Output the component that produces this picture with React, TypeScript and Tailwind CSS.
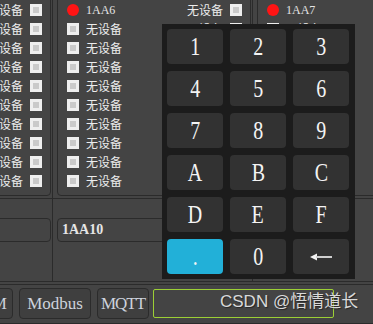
import React from 'react';

const cjk = "font-['Noto_Sans_CJK_SC',sans-serif]";
const serif = "font-['Liberation_Serif','Noto_Sans_CJK_SC',serif]";

const CheckBox: React.FC = () => (
  <span className="w-3 h-3 shrink-0 border-[3px] border-[#eeeeee] bg-[#c9c9c9]" />
);

const RedDot: React.FC = () => <span className="w-3 h-3 shrink-0 rounded-full bg-[#ff1414]" />;

type GroupProps = { head: string; right: number };

const Group: React.FC<GroupProps> = ({ head, right }) => (
  <div className="w-[194px] h-[206px] mt-[-10px] shrink-0 border border-[#2b2b2b] rounded-[4px] pt-[9px] pl-[9px] pr-[8px] flex justify-between">
    <div className="flex flex-col">
      <div className="h-[19px] flex items-center gap-[7px]">
        <RedDot />
        <span className={`${serif} text-[12px] leading-none text-[#e4e4e4]`}>{head}</span>
      </div>
      {Array.from({ length: 9 }).map((_, i) => (
        <div key={i} className="h-[19px] flex items-center gap-[7px]">
          <CheckBox />
          <span className={`${cjk} text-[12px] leading-none text-[#ececec]`}>无设备</span>
        </div>
      ))}
    </div>
    <div className="flex flex-col items-end">
      {Array.from({ length: right }).map((_, i) => (
        <div key={i} className="h-[19px] flex items-center gap-[7px]">
          <span className={`${cjk} text-[12px] leading-none text-[#ececec]`}>无设备</span>
          <CheckBox />
        </div>
      ))}
    </div>
  </div>
);

const Splitter: React.FC = () => (
  <div className="w-[6px] shrink-0 self-stretch">
    <div className="ml-px w-px h-full bg-[#2b2b2b]" />
  </div>
);

const keys = ['1', '2', '3', '4', '5', '6', '7', '8', '9', 'A', 'B', 'C', 'D', 'E', 'F', '.', '0', 'back'];

const BackArrow: React.FC = () => (
  <svg width="22" height="8" viewBox="0 0 22 8">
    <polygon points="0,4 7,0.5 7,7.5" fill="#f2f2f2" />
    <rect x="6" y="3" width="16" height="2" fill="#cfcfcf" />
  </svg>
);

const Keypad: React.FC = () => (
  <div className="absolute left-[162px] top-[24px] w-[193px] h-[255px] bg-[#1c1c1c] pt-[5px] pl-[5px] pr-[6px] pb-[5px] grid grid-cols-[56px_56px_56px] auto-rows-[35px] gap-[7px]">
    {keys.map((k) => (
      <div
        key={k}
        className={`rounded-[4px] flex items-center justify-center ${k === '.' ? 'bg-[#22b0d8]' : 'bg-[#323232]'}`}
      >
        {k === 'back' ? (
          <BackArrow />
        ) : (
          <span className={`${serif} inline-block scale-x-[0.8] text-[25px] leading-none text-[#f4f4f4]`}>{k}</span>
        )}
      </div>
    ))}
  </div>
);

const BarButton: React.FC<{ label: string; className: string }> = ({ label, className }) => (
  <div
    className={`h-[31px] shrink-0 rounded-[4px] border border-[#2b2b2b] bg-[#3f3f3f] flex items-center ${serif} text-[17px] text-[#cdd2dc] ${className}`}
  >
    {label}
  </div>
);

export default function App() {
  return (
    <div className="relative w-[373px] h-[324px] overflow-hidden bg-[#444444] flex flex-col">
      <div className="h-[281px] flex flex-col shrink-0">
        <div className="h-[198px] flex items-start ml-[-143px]">
          <Group head="1AA5" right={10} />
          <Splitter />
          <Group head="1AA6" right={10} />
          <Splitter />
          <Group head="1AA7" right={10} />
        </div>
        <div className="h-px bg-[#2b2b2b]" />
        <div className="h-[82px] flex ml-[-143px]">
          <div className="w-[194px] shrink-0 pt-[19px]">
            <div className="h-[24px] rounded-[4px] border border-[#2b2b2b]" />
          </div>
          <Splitter />
          <div className="w-[194px] shrink-0 pt-[19px]">
            <div className="h-[24px] rounded-[4px] border border-[#2b2b2b] pl-[4px] flex items-center">
              <span className={`${serif} font-bold text-[14px] leading-none text-[#e6e6e6]`}>1AA10</span>
            </div>
          </div>
          <Splitter />
        </div>
      </div>
      <div className="h-[4px] shrink-0 border-y border-[#2b2b2b]" />
      <div className="h-[39px] shrink-0 border-b border-[#2b2b2b] pt-[3px] flex items-start gap-[6px] ml-[-40px]">
        <BarButton label="GSM" className="w-[53px] justify-end pr-[5px]" />
        <BarButton label="Modbus" className="w-[72px] justify-center" />
        <BarButton label="MQTT" className="w-[52px] justify-center tracking-[-1px] mr-[-2px]" />
        <div className="mt-px w-[181px] h-[29px] shrink-0 rounded-[2px] border border-[#9ccf35]" />
      </div>
      <Keypad />
      <div
        className={`absolute left-[220px] top-[290px] leading-[24px] text-[17px] text-[#d9d9d9] font-['Liberation_Sans','Noto_Sans_CJK_SC',sans-serif] [text-shadow:1px_1px_1px_rgba(0,0,0,0.45)]`}
      >
        CSDN @悟情道长
      </div>
    </div>
  );
}
